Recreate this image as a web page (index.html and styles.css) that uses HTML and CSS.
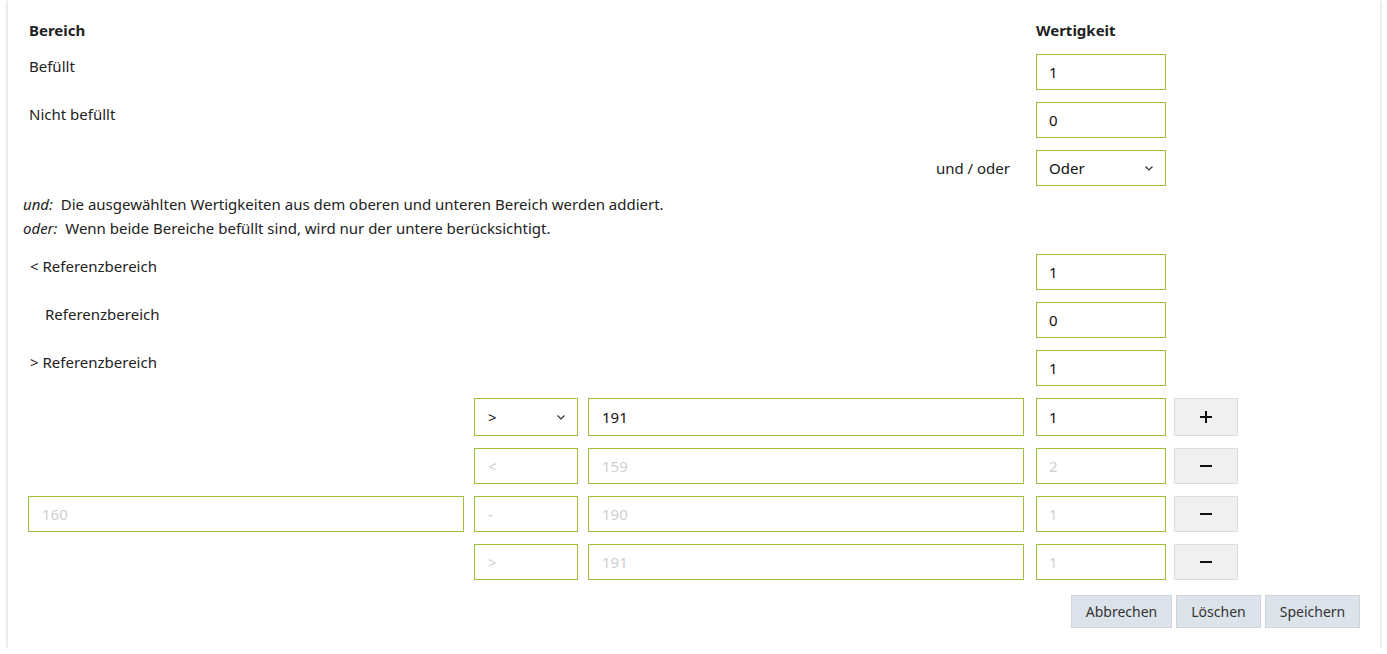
FILE: index.html
```html
<!DOCTYPE html>
<html lang="de">
<head>
<meta charset="utf-8">
<title>Wertigkeit</title>
<link rel="stylesheet" href="styles.css">
</head>
<body>
<div class="card">
  <div class="row head">
    <div class="label bold">Bereich</div>
    <div class="val bold">Wertigkeit</div>
  </div>
  <div class="row">
    <div class="label top">Befüllt</div>
    <div class="val"><div class="field">1</div></div>
  </div>
  <div class="row">
    <div class="label top">Nicht befüllt</div>
    <div class="val"><div class="field">0</div></div>
  </div>
  <div class="row center">
    <div class="label right">und / oder</div>
    <div class="val"><div class="field select">Oder<svg class="chev" width="8" height="5" viewBox="0 0 8 5"><path d="M0.5 0.5 L4 4 L7.5 0.5" fill="none" stroke="#333" stroke-width="1.2"/></svg></div></div>
  </div>
  <div class="explain">
    <div><i>und:</i>&nbsp; Die ausgewählten Wertigkeiten aus dem oberen und unteren Bereich werden addiert.</div>
    <div><i>oder:</i>&nbsp; Wenn beide Bereiche befüllt sind, wird nur der untere berücksichtigt.</div>
  </div>
  <div class="row">
    <div class="label top ref">&lt; Referenzbereich</div>
    <div class="val"><div class="field">1</div></div>
  </div>
  <div class="row">
    <div class="label top ref"><span class="ind">Referenzbereich</span></div>
    <div class="val"><div class="field">0</div></div>
  </div>
  <div class="row">
    <div class="label top ref">&gt; Referenzbereich</div>
    <div class="val"><div class="field">1</div></div>
  </div>

  <div class="drow first">
    <div class="c1"></div>
    <div class="c2 field select">&gt;<svg class="chev" width="8" height="5" viewBox="0 0 8 5"><path d="M0.5 0.5 L4 4 L7.5 0.5" fill="none" stroke="#333" stroke-width="1.2"/></svg></div>
    <div class="c3 field">191</div>
    <div class="c4 field">1</div>
    <button class="c5 pm"><svg width="12" height="12" viewBox="0 0 12 12"><path d="M0 6 H12 M6 0 V12" stroke="#111" stroke-width="2"/></svg></button>
  </div>
  <div class="drow">
    <div class="c1"></div>
    <div class="c2 field dis">&lt;</div>
    <div class="c3 field dis">159</div>
    <div class="c4 field dis">2</div>
    <button class="c5 pm"><svg width="12" height="12" viewBox="0 0 12 12"><path d="M0 6 H12" stroke="#111" stroke-width="2"/></svg></button>
  </div>
  <div class="drow">
    <div class="c1 field dis">160</div>
    <div class="c2 field dis">-</div>
    <div class="c3 field dis">190</div>
    <div class="c4 field dis">1</div>
    <button class="c5 pm"><svg width="12" height="12" viewBox="0 0 12 12"><path d="M0 6 H12" stroke="#111" stroke-width="2"/></svg></button>
  </div>
  <div class="drow">
    <div class="c1"></div>
    <div class="c2 field dis">&gt;</div>
    <div class="c3 field dis">191</div>
    <div class="c4 field dis">1</div>
    <button class="c5 pm"><svg width="12" height="12" viewBox="0 0 12 12"><path d="M0 6 H12" stroke="#111" stroke-width="2"/></svg></button>
  </div>

  <div class="actions">
    <button class="btn w1">Abbrechen</button>
    <button class="btn w2">Löschen</button>
    <button class="btn w3">Speichern</button>
  </div>
</div>
</body>
</html>
```

FILE: styles.css
```css
html, body {
  margin: 0;
  padding: 0;
  background: #ffffff;
}
body {
  font-family: "Noto Sans", "Open Sans", sans-serif;
  font-size: 15px;
  color: #222;
}
.card {
  margin: 0 7px 0 8px;
  background: #fff;
  box-shadow: 0 1px 4px rgba(0,0,0,0.22);
  padding: 20px 0 20px 0;
  height: 608px;
}
.row {
  display: flex;
  align-items: flex-start;
  padding-left: 21px;
  margin-bottom: 12px;
}
.row.center { align-items: center; }
.row.head { margin-bottom: 14px; }
.label {
  width: 1007px;
  line-height: 20px;
}
.label.top { padding-top: 2px; }
.label.right {
  text-align: right;
  padding-right: 26px;
  box-sizing: border-box;
}
.label.ref { padding-left: 1px; box-sizing: border-box; }
.ind { padding-left: 15px; }
.bold { font-weight: bold; line-height: 20px; }
.val { width: 130px; }
.field {
  box-sizing: border-box;
  height: 36px;
  border: 1px solid #9fc03a;
  padding: 0 12px;
  display: flex;
  align-items: center;
  background: #fff;
  color: #111;
  width: 130px;
}
.field.select {
  justify-content: space-between;
  padding-right: 12px;
}
.chev { display: block; }
.explain {
  padding-left: 15px;
  line-height: 24px;
  margin-top: -6px;
  margin-bottom: 14px;
}
.drow {
  display: flex;
  padding-left: 20px;
  margin-bottom: 12px;
}
.drow.first .field, .drow.first .pm { height: 38px; }
.c1 { width: 436px; margin-right: 10px; }
.c2 { width: 104px; margin-right: 10px; }
.c3 { width: 436px; margin-right: 12px; }
.c4 { width: 130px; margin-right: 8px; }
.field.c1, .field.c2, .field.c3 { padding-left: 13px; }
.field.dis { color: #cfcfcf; }
.pm {
  width: 64px;
  height: 36px;
  box-sizing: border-box;
  background: #f0f0f0;
  border: 1px solid #dcdcdc;
  padding: 0;
  display: flex;
  align-items: center;
  justify-content: center;
}
.actions {
  display: flex;
  justify-content: flex-end;
  gap: 4px;
  padding-right: 20px;
  margin-top: 15px;
}
.btn {
  font-family: "Noto Sans", "Open Sans", sans-serif;
  font-size: 14px;
  color: #333;
  height: 33px;
  background: #dce3ea;
  border: 1px solid #cfd5db;
  padding: 0;
}
.w1 { width: 101px; }
.w2 { width: 85px; }
.w3 { width: 95px; }
```
